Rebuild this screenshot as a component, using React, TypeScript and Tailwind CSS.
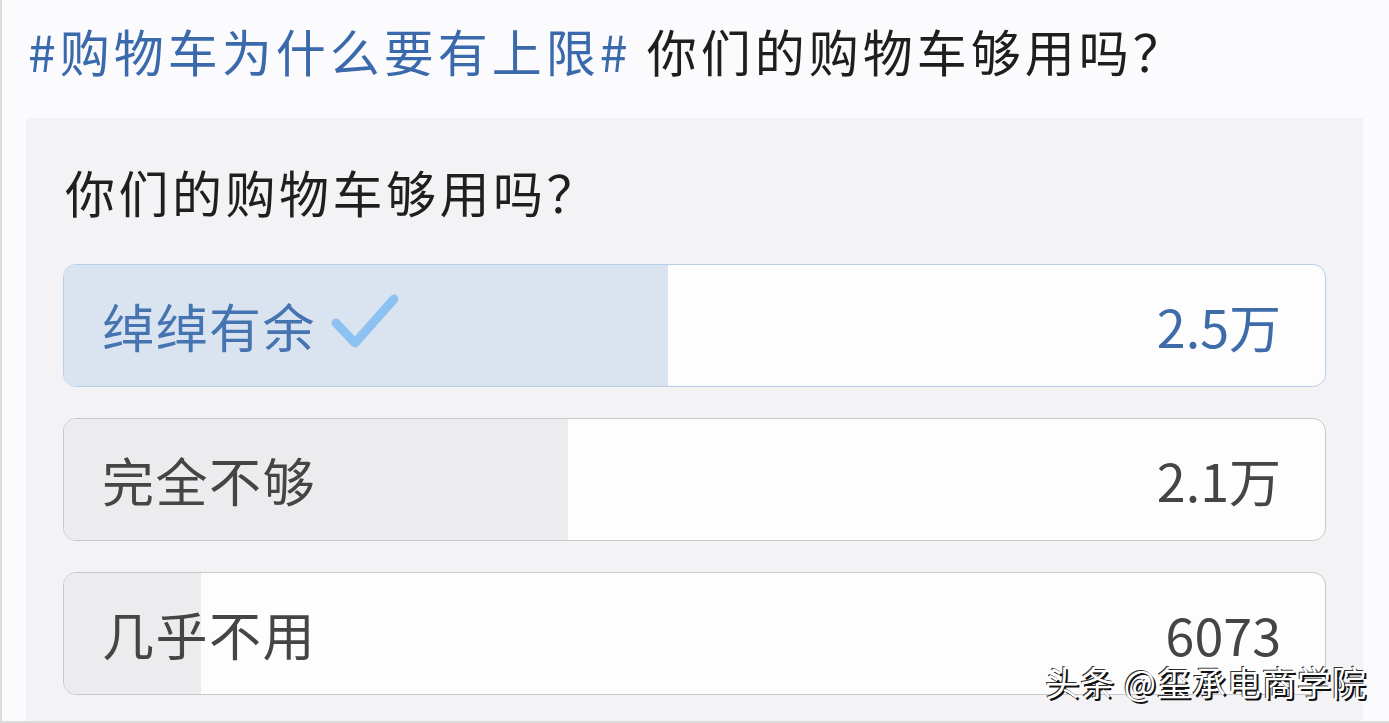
import React from "react";

const font = { fontFamily: '"Noto Sans CJK SC", "Noto Sans", sans-serif' };

type Option = { label: string; pct: number; display: string; voted?: boolean };

const options: Option[] = [
  { label: "绰绰有余", pct: 47.9, display: "2.5万", voted: true },
  { label: "完全不够", pct: 40, display: "2.1万" },
  { label: "几乎不用", pct: 10.9, display: "6073" },
];

function Check() {
  return (
    <svg width="70" height="60" viewBox="0 0 70 60" className="ml-[14px] -mt-[6px]">
      <path
        d="M6 30 L25 50 L64 6"
        fill="none"
        stroke="#8cc1f1"
        strokeWidth="9"
        strokeLinecap="round"
        strokeLinejoin="round"
      />
    </svg>
  );
}

function Row({ o }: { o: Option }) {
  return (
    <div
      className={
        "relative h-[123px] rounded-[13px] border overflow-hidden bg-[#fdfdfe] " +
        (o.voted ? "border-[#b8cee6]" : "border-[#c8c8ca]")
      }
    >
      <div
        className={"absolute left-0 top-0 bottom-0 " + (o.voted ? "bg-[#dae4f0]" : "bg-[#ececee]")}
        style={{ width: o.pct + "%" }}
      />
      <div className="relative flex h-full items-center justify-between pl-[38px] pr-[44px]">
        <div className="flex items-center">
          <span
            className={
              "text-[52px] leading-none tracking-[1.5px] " + (o.voted ? "text-[#4574b0]" : "text-[#454545]")
            }
          >
            {o.label}
          </span>
          {o.voted && <Check />}
        </div>
        <span className={"text-[52px] leading-none " + (o.voted ? "text-[#3d6ca9]" : "text-[#454545]")}>
          {o.display}
        </span>
      </div>
    </div>
  );
}

export default function App() {
  return (
    <div
      style={font}
      className="relative w-[1389px] h-[723px] overflow-hidden bg-[#fbfbfd] border-l-2 border-b-2 border-[#dcdcdc]"
    >
      <h1 className="pt-[20px] pl-[26px] text-[50px] leading-[60px] tracking-[4px] font-normal whitespace-nowrap">
        <span className="text-[#3a6aab]">#购物车为什么要有上限#</span>
        <span className="text-[#1e1e1e]"> 你们的购物车够用吗？</span>
      </h1>
      <div className="mt-[38px] ml-[24px] w-[1337px] h-[700px] bg-[#f3f3f5] pt-[43px] px-[37px]">
        <h2 className="pl-[2px] text-[50px] leading-[60px] tracking-[3.5px] text-[#1f1f1f] font-normal">
          你们的购物车够用吗？
        </h2>
        <div className="mt-[43px] flex flex-col gap-[31px]">
          {options.map((o) => (
            <Row key={o.label} o={o} />
          ))}
        </div>
      </div>
      <div
        className="absolute right-[22px] bottom-[22px] text-[34px] leading-none tracking-[1px] text-white whitespace-nowrap"
        style={{ textShadow: "2px 2px 0 #111, -1px -1px 0 #333" }}
      >
        头条 @玺承电商学院
      </div>
    </div>
  );
}
